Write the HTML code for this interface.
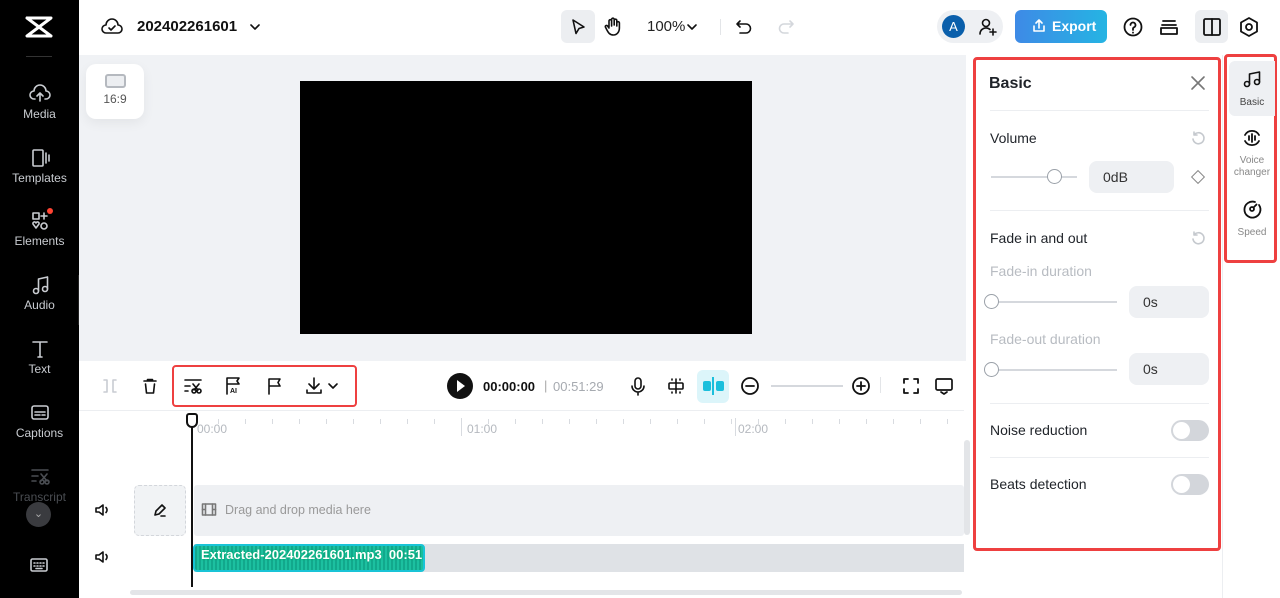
<!DOCTYPE html>
<html><head><meta charset="utf-8"><style>
*{box-sizing:border-box;margin:0;padding:0}
body{width:1280px;height:598px;overflow:hidden;font-family:"Liberation Sans",sans-serif;background:#fff;position:relative;color:#111}
.abs{position:absolute}
.side{left:0;top:0;width:79px;height:598px;background:#000}
.si{position:absolute;left:0;width:79px;text-align:center;color:#c9ccd1;font-size:12px}
.si svg{display:block;margin:0 auto 3px}
svg{fill:none;stroke:currentColor;stroke-width:1.6;stroke-linecap:round;stroke-linejoin:round}
.lbl{font-size:14px;color:#1f2329}
.red{border:3px solid #ee4040;border-radius:4px}
.in{background:#eef0f3;border-radius:8px;font-size:14px;color:#333;padding-left:14px;line-height:32px}
.tog{width:38px;height:21px;border-radius:11px;background:#d3d6db}
.tog:after{content:"";position:absolute;left:2px;top:2px;width:17px;height:17px;border-radius:50%;background:#fff}
.knob{width:15px;height:15px;border-radius:50%;background:#fff;border:1px solid #9aa0a8}
.line{height:2px;background:#d5d8dd}
</style></head><body>
<div class="abs side">
  <svg class="abs" style="left:24px;top:14px;width:30px;height:26px;stroke:#fff;stroke-width:3" viewBox="0 0 30 26"><path d="M3 4h24L3 22h24M3 4l24 18"/></svg>
  <div class="abs" style="left:26px;top:56px;width:26px;height:1px;background:#333"></div>
  <div class="si" style="top:84px"><svg width="22" height="20" viewBox="0 0 22 20"><path d="M6 15H5a4 4 0 0 1 0-8 6 6 0 0 1 12 0 4 4 0 0 1 0 8h-1M11 17V9M8 12l3-3 3 3"/></svg>Media</div>
  <div class="si" style="top:148px"><svg width="22" height="20" viewBox="0 0 22 20"><rect x="4" y="2" width="10" height="16" rx="1"/><path d="M17 5v10M20 7v6"/></svg>Templates</div>
  <div class="si" style="top:211px"><svg width="22" height="20" viewBox="0 0 22 20"><rect x="4" y="2" width="6" height="6"/><path d="M15 2v6M12 5h6M4 13l3 4 3-4a1.5 1.5 0 0 0-3-1 1.5 1.5 0 0 0-3 1"/><circle cx="15" cy="15" r="3"/></svg>Elements</div>
  <div class="abs" style="left:47px;top:208px;width:6px;height:6px;border-radius:50%;background:#f43"></div>
  <div class="si" style="top:275px"><svg width="22" height="20" viewBox="0 0 22 20"><circle cx="7" cy="16" r="2.5"/><circle cx="16" cy="14" r="2.5"/><path d="M9.5 16V4l9-2v12"/></svg>Audio</div>
  <div class="abs" style="left:78px;top:275px;width:7px;height:50px;background:#222;border-radius:0 6px 6px 0"></div>
  <div class="si" style="top:339px"><svg width="22" height="20" viewBox="0 0 22 20"><path d="M4 3h14M11 3v15M9 18h4"/></svg>Text</div>
  <div class="si" style="top:403px"><svg width="22" height="20" viewBox="0 0 22 20"><rect x="3" y="3" width="16" height="13" rx="2"/><path d="M6 9h10M6 12h5M13 12h3"/></svg>Captions</div>
  <div class="si" style="top:467px;color:#4a4d52"><svg width="22" height="20" viewBox="0 0 22 20"><path d="M3 3h16M3 9h6M3 14h4"/><circle cx="13" cy="15" r="2"/><circle cx="18" cy="15" r="2"/><path d="M12 7l6 7M18 7l-6 7"/></svg>Transcript</div>
  <div class="abs" style="left:26px;top:502px;width:25px;height:25px;border-radius:50%;background:#3a3b3f;color:#aaa;font-size:11px;text-align:center;line-height:25px">⌄</div>
  <svg class="abs" style="left:29px;top:557px;color:#c9ccd1" width="20" height="16" viewBox="0 0 20 16"><rect x="2" y="2" width="16" height="12" rx="1.5"/><path d="M5 6h1M8 6h1M11 6h1M14 6h1M5 9h1M8 9h1M11 9h1M14 9h1M7 11.5h6"/></svg>
</div>
<!-- top bar -->
<div class="abs" style="left:79px;top:0;width:1201px;height:55px;background:#fff"></div>
<svg class="abs" style="left:101px;top:17px" width="22" height="20" viewBox="0 0 22 20"><path d="M6 16H5a4 4 0 0 1 0-8 6 6 0 0 1 12 0 4 4 0 0 1 0 8H6"/><path d="M8 11l2 2 4-4"/></svg>
<div class="abs" style="left:137px;top:18px;font-size:15px;font-weight:bold">202402261601</div>
<svg class="abs" style="left:249px;top:21px" width="12" height="12" viewBox="0 0 12 12"><path d="M2 4l4 4 4-4"/></svg>
<div class="abs" style="left:561px;top:10px;width:34px;height:33px;background:#eceef1;border-radius:6px"></div>
<svg class="abs" style="left:569px;top:17px" width="18" height="20" viewBox="0 0 18 20"><path d="M4 3l11 7-5 1.5-3 5z"/></svg>
<svg class="abs" style="left:603px;top:16px" width="20" height="22" viewBox="0 0 20 22"><path d="M6 11V5a1.3 1.3 0 0 1 2.6 0v5M8.6 9V3.5a1.3 1.3 0 0 1 2.6 0V9M11.2 9V4.5a1.3 1.3 0 0 1 2.6 0V10M13.8 10V7a1.3 1.3 0 0 1 2.6 0v5c0 4-2.5 7-6 7s-5-2-7-6l-1-2a1.2 1.2 0 0 1 2-1.2L6 12"/></svg>
<div class="abs" style="left:647px;top:18px;font-size:15px;color:#222">100%</div>
<svg class="abs" style="left:686px;top:21px" width="12" height="12" viewBox="0 0 12 12"><path d="M2 4l4 4 4-4"/></svg>
<div class="abs" style="left:720px;top:19px;width:1px;height:16px;background:#e3e5e8"></div>
<svg class="abs" style="left:734px;top:17px" width="20" height="20" viewBox="0 0 20 20"><path d="M6 4L3 7l3 3M3 7h9a4.5 4.5 0 0 1 0 9H6"/></svg>
<svg class="abs" style="left:776px;top:17px;color:#d4d7dc" width="20" height="20" viewBox="0 0 20 20"><path d="M14 4l3 3-3 3M17 7H8a4.5 4.5 0 0 0 0 9h4"/></svg>
<div class="abs" style="left:937px;top:10px;width:66px;height:33px;background:#eef0f3;border-radius:17px"></div>
<div class="abs" style="left:942px;top:15px;width:23px;height:23px;border-radius:50%;background:#0a5fab;color:#fff;font-size:13px;text-align:center;line-height:23px">A</div>
<svg class="abs" style="left:978px;top:17px" width="20" height="20" viewBox="0 0 20 20"><circle cx="8" cy="6" r="3.5"/><path d="M2 17a6 6 0 0 1 10-4.5M15 12v6M12 15h6"/></svg>
<div class="abs" style="left:1015px;top:10px;width:92px;height:33px;border-radius:6px;background:linear-gradient(90deg,#3e8ae6,#25b4e3);color:#fff;font-weight:bold;font-size:14px;line-height:33px;padding-left:37px">Export</div>
<svg class="abs" style="left:1031px;top:18px;color:#fff" width="16" height="16" viewBox="0 0 16 16"><path d="M8 10V2M5 5l3-3 3 3M3 8v5h10V8"/></svg>
<svg class="abs" style="left:1122px;top:16px;stroke-width:1.8" width="22" height="22" viewBox="0 0 22 22"><circle cx="11" cy="11" r="8.5"/><path d="M8.5 9a2.5 2.5 0 1 1 3.5 2.3c-.6.3-1 .8-1 1.5V14M11 16.5v.2"/></svg>
<svg class="abs" style="left:1158px;top:16px;stroke-width:1.8" width="22" height="22" viewBox="0 0 22 22"><path d="M5 5h12M4 9h14M3 12h16v6H3z"/></svg>
<div class="abs" style="left:1195px;top:10px;width:33px;height:33px;background:#eceef1;border-radius:6px"></div>
<svg class="abs" style="left:1201px;top:16px;stroke-width:1.8" width="22" height="22" viewBox="0 0 22 22"><rect x="3" y="3" width="16" height="16" rx="1.5"/><path d="M11 3v16"/></svg>
<svg class="abs" style="left:1238px;top:16px;stroke-width:1.8" width="22" height="22" viewBox="0 0 22 22"><path d="M11 2l8 4.5v9L11 20l-8-4.5v-9z"/><circle cx="11" cy="11" r="3"/></svg>
<!-- canvas area -->
<div class="abs" style="left:79px;top:55px;width:887px;height:306px;background:#f0f2f5"></div>
<div class="abs" style="left:86px;top:64px;width:58px;height:55px;background:#fff;border-radius:10px;box-shadow:0 4px 12px rgba(0,0,0,.06);text-align:center;font-size:12px;color:#555">
 <div style="margin:10px auto 4px;width:21px;height:14px;border:2px solid #b5b9bf;border-radius:3px;background:#eceef1"></div>16:9</div>
<div class="abs" style="left:300px;top:81px;width:452px;height:253px;background:#000"></div>
<!-- timeline toolbar -->
<div class="abs" style="left:79px;top:361px;width:887px;height:237px;background:#fff"></div>
<div class="abs" style="left:79px;top:410px;width:885px;height:1px;background:#eceef1"></div>
<svg class="abs" style="left:101px;top:377px;color:#c8ccd2" width="18" height="18" viewBox="0 0 18 18"><path d="M3 3h3v12H3M15 3h-3v12h3M6 3v12"/></svg>
<svg class="abs" style="left:141px;top:377px" width="18" height="18" viewBox="0 0 18 18"><path d="M3 4h12M6.5 4V2.5h5V4M4.5 7l1 9h7l1-9"/></svg>
<div class="abs red" style="left:172px;top:365px;width:185px;height:42px;border-width:2.5px"></div>
<svg class="abs" style="left:183px;top:377px" width="20" height="18" viewBox="0 0 20 18"><path d="M2 3h16M2 9h5M2 14h3"/><circle cx="11" cy="14" r="2"/><circle cx="16" cy="14" r="2"/><path d="M10 7l5 6M16 7l-5 6"/></svg>
<svg class="abs" style="left:224px;top:376px" width="18" height="20" viewBox="0 0 18 20"><path d="M3 18V2h12l-2 3 2 3H3"/><text x="6" y="17" font-size="7" font-weight="bold" fill="#111" stroke="none" font-family="Liberation Sans">AI</text></svg>
<svg class="abs" style="left:265px;top:376px" width="18" height="20" viewBox="0 0 18 20"><path d="M4 18V3h11l-2 3.5 2 3.5H4"/></svg>
<svg class="abs" style="left:304px;top:376px" width="20" height="20" viewBox="0 0 20 20"><path d="M10 2v11M5 8l5 5 5-5M3 14v3h14v-3"/></svg>
<svg class="abs" style="left:327px;top:380px" width="12" height="12" viewBox="0 0 12 12"><path d="M2 4l4 4 4-4"/></svg>
<div class="abs" style="left:447px;top:373px;width:26px;height:26px;border-radius:50%;background:#111"></div>
<div class="abs" style="left:457px;top:380px;width:0;height:0;border-left:8px solid #fff;border-top:6px solid transparent;border-bottom:6px solid transparent"></div>
<div class="abs" style="left:483px;top:379px;font-size:13px;font-weight:bold">00:00:00</div>
<div class="abs" style="left:544px;top:378px;font-size:13px;color:#aaa">|</div>
<div class="abs" style="left:553px;top:379px;font-size:13px;color:#a6aab0">00:51:29</div>
<svg class="abs" style="left:629px;top:376px" width="18" height="20" viewBox="0 0 18 20"><rect x="6" y="2" width="6" height="11" rx="3"/><path d="M3 10a6 6 0 0 0 12 0M9 16v3"/></svg>
<svg class="abs" style="left:666px;top:376px" width="20" height="20" viewBox="0 0 20 20"><rect x="3" y="7" width="14" height="6" rx="1"/><path d="M10 3v14M6 3v1M14 3v1M6 16v1M14 16v1"/></svg>
<div class="abs" style="left:697px;top:370px;width:32px;height:33px;background:#dcf5fa;border-radius:6px"></div>
<div class="abs" style="left:703px;top:381px;width:8px;height:10px;background:#1bbfdc;border-radius:2px"></div>
<div class="abs" style="left:716px;top:381px;width:8px;height:10px;background:#1bbfdc;border-radius:2px"></div>
<div class="abs" style="left:712px;top:377px;width:2px;height:18px;background:#1bbfdc"></div>
<svg class="abs" style="left:739px;top:375px;stroke-width:1.8" width="22" height="22" viewBox="0 0 22 22"><circle cx="11" cy="11" r="8"/><path d="M7 11h8"/></svg>
<div class="abs" style="left:771px;top:385px;width:72px;height:2px;background:#d5d8dd"></div>
<svg class="abs" style="left:850px;top:375px;stroke-width:1.8" width="22" height="22" viewBox="0 0 22 22"><circle cx="11" cy="11" r="8"/><path d="M7 11h8M11 7v8"/></svg>
<div class="abs" style="left:880px;top:377px;width:1px;height:16px;background:#e3e5e8"></div>
<svg class="abs" style="left:902px;top:377px;stroke-width:1.8" width="18" height="18" viewBox="0 0 18 18"><path d="M2 6V2h4M12 2h4v4M16 12v4h-4M6 16H2v-4"/></svg>
<svg class="abs" style="left:934px;top:376px;stroke-width:1.7" width="20" height="20" viewBox="0 0 20 20"><rect x="2" y="3" width="16" height="11" rx="1.5"/><path d="M7 16l3 2 3-2"/></svg>
<!-- ruler -->
<div class="abs" style="left:191px;top:419px;width:770px;height:10px;background:repeating-linear-gradient(90deg,#d8dbe0 0 1px,transparent 1px 27px);clip-path:inset(0 0 5px 0)"></div>
<div class="abs" style="left:461px;top:418px;width:1px;height:18px;background:#d8dbe0"></div>
<div class="abs" style="left:735px;top:418px;width:1px;height:18px;background:#d8dbe0"></div>
<div class="abs" style="left:197px;top:422px;font-size:12px;color:#b5b9bf">00:00</div>
<div class="abs" style="left:467px;top:422px;font-size:12px;color:#b5b9bf">01:00</div>
<div class="abs" style="left:738px;top:422px;font-size:12px;color:#b5b9bf">02:00</div>
<!-- tracks -->
<svg class="abs" style="left:93px;top:501px" width="18" height="18" viewBox="0 0 18 18"><path d="M3 7h3l4-3v10l-4-3H3zM13 6.5a3.5 3.5 0 0 1 0 5"/></svg>
<svg class="abs" style="left:93px;top:548px" width="18" height="18" viewBox="0 0 18 18"><path d="M3 7h3l4-3v10l-4-3H3zM13 6.5a3.5 3.5 0 0 1 0 5"/></svg>
<div class="abs" style="left:134px;top:485px;width:52px;height:51px;border:1px dashed #d3d6db;border-radius:5px;background:#f1f3f5"></div>
<svg class="abs" style="left:151px;top:501px" width="18" height="18" viewBox="0 0 18 18"><path d="M4 14l1-4 6-6 3 3-6 6zM10 15h4"/></svg>
<div class="abs" style="left:194px;top:485px;width:770px;height:51px;background:#eef0f3;border-radius:3px"></div>
<svg class="abs" style="left:201px;top:502px;color:#777" width="16" height="15" viewBox="0 0 16 15"><rect x="1.5" y="2" width="13" height="11"/><path d="M4.5 2v11M11.5 2v11M1.5 7.5h3M11.5 7.5h3"/></svg>
<div class="abs" style="left:225px;top:503px;font-size:12.5px;color:#999">Drag and drop media here</div>
<div class="abs" style="left:194px;top:544px;width:770px;height:28px;background:#dfe2e6"></div>
<div class="abs" style="left:193px;top:544px;width:232px;height:28px;background:repeating-linear-gradient(90deg,#12a88c 0 2px,#1cc0a0 2px 4px);border:2px solid #19c4d6;border-radius:4px"></div>
<div class="abs" style="left:201px;top:547px;font-size:13px;color:#fff;font-weight:bold;text-shadow:0 0 2px #0a6;white-space:nowrap;width:222px;overflow:hidden">Extracted-202402261601.mp3&nbsp; 00:51:29</div>
<div class="abs" style="left:191px;top:415px;width:2px;height:172px;background:#111"></div>
<div class="abs" style="left:186px;top:413px;width:12px;height:15px;background:#fff;border:2px solid #111;border-radius:3px 3px 6px 6px"></div>
<div class="abs" style="left:130px;top:590px;width:832px;height:5px;background:#e3e5e8;border-radius:3px"></div>
<div class="abs" style="left:964px;top:440px;width:6px;height:95px;background:#e3e5e8;border-radius:3px"></div>
<!-- right panel -->
<div class="abs" style="left:1222px;top:55px;width:1px;height:543px;background:#eceef1"></div>
<div class="abs red" style="left:973px;top:57px;width:248px;height:494px"></div>
<div class="abs" style="left:989px;top:75px;font-size:16px;font-weight:bold;color:#1f2329">Basic</div>
<svg class="abs" style="left:1190px;top:75px;color:#777" width="16" height="16" viewBox="0 0 16 16"><path d="M2 2l12 12M14 2L2 14"/></svg>
<div class="abs" style="left:990px;top:110px;width:219px;height:1px;background:#eceef1"></div>
<div class="abs lbl" style="left:990px;top:130px">Volume</div>
<svg class="abs" style="left:1191px;top:131px;color:#c5c9ce" width="15" height="15" viewBox="0 0 15 15"><path d="M3 4a5.5 5.5 0 1 1-1 4M3 1v3h3"/></svg>
<div class="abs line" style="left:991px;top:176px;width:86px"></div>
<div class="abs knob" style="left:1047px;top:169px"></div>
<div class="abs in" style="left:1089px;top:161px;width:85px;height:32px">0dB</div>
<div class="abs" style="left:1193px;top:172px;width:10px;height:10px;border:1.3px solid #888;transform:rotate(45deg)"></div>
<div class="abs" style="left:990px;top:210px;width:219px;height:1px;background:#eceef1"></div>
<div class="abs lbl" style="left:990px;top:230px">Fade in and out</div>
<svg class="abs" style="left:1191px;top:231px;color:#c5c9ce" width="15" height="15" viewBox="0 0 15 15"><path d="M3 4a5.5 5.5 0 1 1-1 4M3 1v3h3"/></svg>
<div class="abs" style="left:990px;top:263px;font-size:14px;color:#b8bcc2">Fade-in duration</div>
<div class="abs line" style="left:991px;top:301px;width:126px"></div>
<div class="abs knob" style="left:984px;top:294px"></div>
<div class="abs in" style="left:1129px;top:286px;width:80px;height:32px">0s</div>
<div class="abs" style="left:990px;top:331px;font-size:14px;color:#b8bcc2">Fade-out duration</div>
<div class="abs line" style="left:991px;top:369px;width:126px"></div>
<div class="abs knob" style="left:984px;top:362px"></div>
<div class="abs in" style="left:1129px;top:353px;width:80px;height:32px">0s</div>
<div class="abs" style="left:990px;top:403px;width:219px;height:1px;background:#eceef1"></div>
<div class="abs lbl" style="left:990px;top:422px">Noise reduction</div>
<div class="abs tog" style="left:1171px;top:420px"></div>
<div class="abs" style="left:990px;top:457px;width:219px;height:1px;background:#eceef1"></div>
<div class="abs lbl" style="left:990px;top:476px">Beats detection</div>
<div class="abs tog" style="left:1171px;top:474px"></div>
<!-- tabs -->
<div class="abs red" style="left:1224px;top:54px;width:53px;height:209px"></div>
<div class="abs" style="left:1229px;top:61px;width:46px;height:55px;background:#eef0f3;border-radius:6px 0 0 6px"></div>
<svg class="abs" style="left:1242px;top:70px" width="20" height="18" viewBox="0 0 20 18"><circle cx="5" cy="14" r="2.5"/><circle cx="15" cy="12" r="2.5"/><path d="M7.5 14V4l10-2v10"/></svg>
<div class="abs" style="left:1229px;top:97px;width:46px;text-align:center;font-size:10px;color:#444">Basic</div>
<svg class="abs" style="left:1241px;top:128px;stroke-width:1.8" width="22" height="20" viewBox="0 0 22 20"><path d="M4 7a8 8 0 0 1 14 0M18 13a8 8 0 0 1-14 0M8 8v4M11 6v8M14 8v4"/></svg>
<div class="abs" style="left:1227px;top:155px;width:50px;text-align:center;font-size:10px;color:#888;line-height:12px">Voice<br>changer</div>
<svg class="abs" style="left:1241px;top:198px;stroke-width:1.8" width="22" height="22" viewBox="0 0 22 22"><path d="M18 7a8 8 0 1 1-4-3"/><circle cx="11" cy="11" r="2"/><path d="M12.5 9.5l3-3"/></svg>
<div class="abs" style="left:1229px;top:227px;width:46px;text-align:center;font-size:10px;color:#888">Speed</div>
</body></html>
